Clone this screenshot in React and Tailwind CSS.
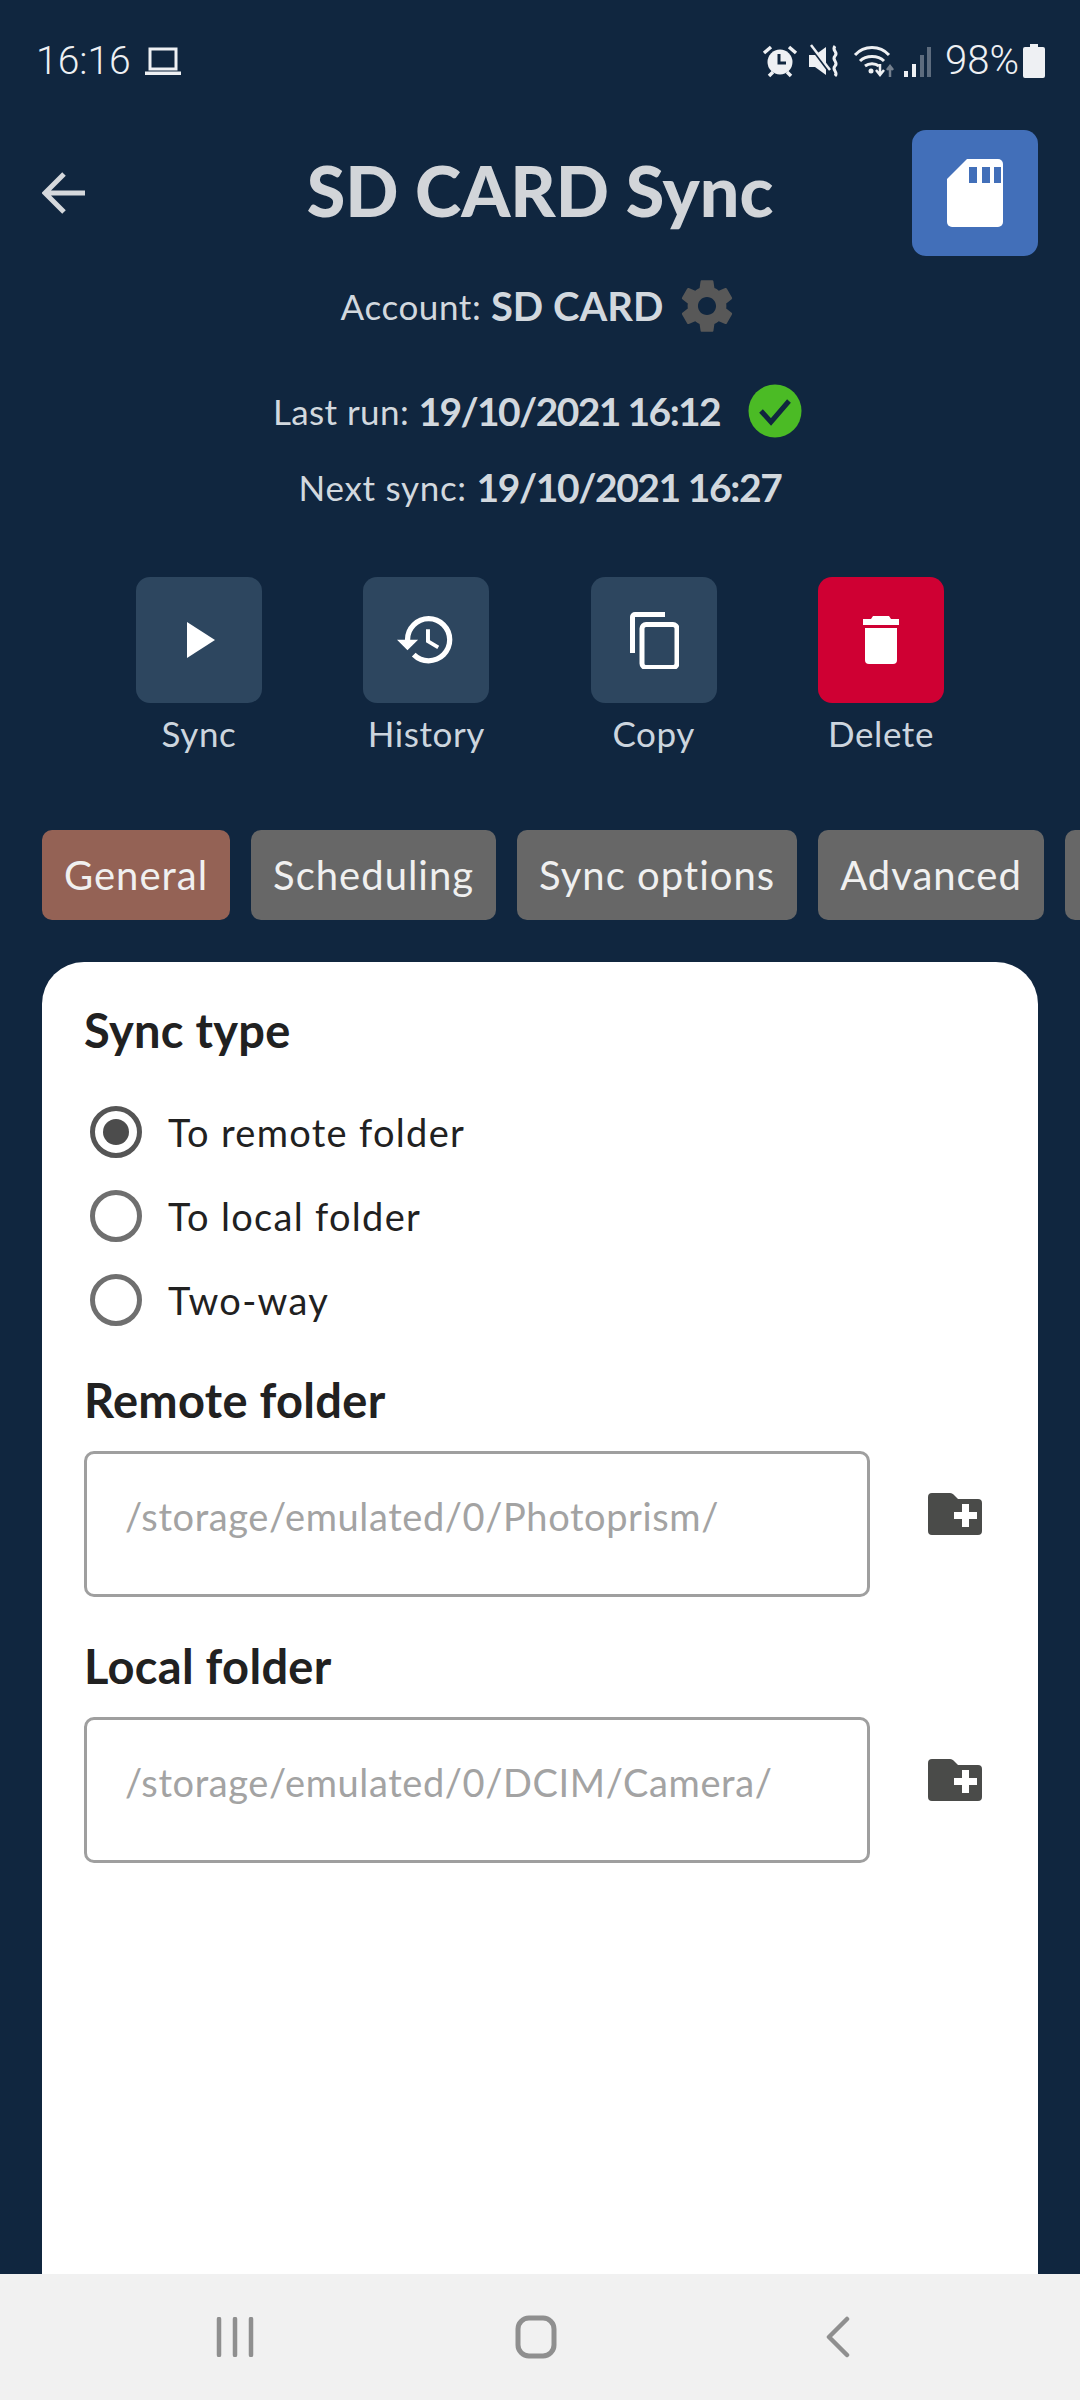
import React from "react";

const textFont = "font-['Lato','Liberation_Sans',sans-serif]";

function StatusBar() {
  return (
    <div className="flex h-[84px] shrink-0 items-end justify-between pr-[35px] pl-[36px] text-[#eef0f3]">
      <div className="flex items-center gap-[14px]">
        <span className="font-['Roboto',sans-serif] text-[39px] leading-[46px] font-light">16:16</span>
        <svg width="36" height="30" viewBox="0 0 36 30">
          <path d="M5 3h26v20H5z" fill="none" stroke="#eef0f3" strokeWidth="3" />
          <path d="M0 25.500h36V29H0z" fill="#eef0f3" />
        </svg>
      </div>
      <div className="flex items-center">
        <svg width="36" height="34" viewBox="0 0 36 34" className="mr-[10px]">
          <circle cx="18" cy="18" r="12.500" fill="#eef0f3" />
          <path d="M17 10v9h7" fill="none" stroke="#10263f" strokeWidth="3" />
          <path d="M2 9l7-6M34 9l-7-6M7 32l4-4M29 32l-4-4" stroke="#eef0f3" strokeWidth="3.500" />
        </svg>
        <svg width="34" height="34" viewBox="0 0 34 34" className="mr-[11px]">
          <path d="M1 11h6l11-8v28L7 23H1z" fill="#eef0f3" />
          <path d="M3 3l18 24" stroke="#10263f" strokeWidth="3" />
          <path d="M3 1l19 25" stroke="#eef0f3" strokeWidth="2.500" />
          <path d="M27 2c-4 5 4 6 0 10s4 6 0 10 4 6 0 10" fill="none" stroke="#eef0f3" strokeWidth="3" />
        </svg>
        <svg width="42" height="34" viewBox="0 0 42 34" className="mr-[8px]">
          <path d="M2 11c9-10 25-10 34 0M7 17c6-6 18-6 24 0M12 22c4-3 10-3 14 0" fill="none" stroke="#eef0f3" strokeWidth="3" />
          <circle cx="18" cy="27" r="2.500" fill="#eef0f3" />
          <path d="M27 20v10M23 26l4 5 4-5" fill="none" stroke="#eef0f3" strokeWidth="2.500" />
          <path d="M37 33v-10M34 26l3-4 3 4" fill="none" stroke="#75808e" strokeWidth="2.500" />
        </svg>
        <svg width="28" height="34" viewBox="0 0 28 34" className="mr-[14px]">
          <path d="M1 27h4v6H1z" fill="#eef0f3" />
          <path d="M9 20h4v13H9z" fill="#eef0f3" />
          <path d="M17 11h4v22h-4z" fill="#5d6c7e" />
          <path d="M24 3h4v30h-4z" fill="#5d6c7e" />
        </svg>
        <span className="font-['Roboto',sans-serif] text-[40px] leading-[46px] font-light">98%</span>
        <svg width="22" height="34" viewBox="0 0 22 34" className="ml-[4px]">
          <path d="M7 0h8v3h5a2 2 0 0 1 2 2v27a2 2 0 0 1-2 2H2a2 2 0 0 1-2-2V5a2 2 0 0 1 2-2h5z" fill="#eef0f3" />
        </svg>
      </div>
    </div>
  );
}

function ActionButton({ label, color, children }) {
  return (
    <div className="flex w-[126px] flex-col items-center">
      <div className={`flex h-[126px] w-[126px] items-center justify-center rounded-[14px] ${color}`}>
        {children}
      </div>
      <span className="mt-[10px] text-[35px] leading-[40px] tracking-[0.6px] whitespace-nowrap text-[#ccd5de]">
        {label}
      </span>
    </div>
  );
}

function Tab({ label, active }) {
  return (
    <div
      className={`flex h-[90px] min-w-[60px] shrink-0 items-center rounded-[10px] px-[22px] text-[40px] tracking-[1px] whitespace-nowrap text-[#f0f0f0] ${
        active ? "bg-[#946255]" : "bg-[#676767]"
      }`}
    >
      {label}
    </div>
  );
}

function Radio({ label, checked }) {
  return (
    <div className="flex h-[84px] items-center">
      <div
        className={`ml-[6px] flex h-[52px] w-[52px] items-center justify-center rounded-full border-[5px] ${
          checked ? "border-[#555555]" : "border-[#6f6f6f]"
        }`}
      >
        {checked && <div className="h-[26px] w-[26px] rounded-full bg-[#4c4c4c]" />}
      </div>
      <span className="ml-[26px] text-[38px] tracking-[1.3px] text-[#212121]">{label}</span>
    </div>
  );
}

function FolderField({ title, value }) {
  return (
    <div>
      <h3 className="text-[47px] leading-[48px] font-bold tracking-[0.3px] text-[#212121]">{title}</h3>
      <div className="mt-[27px] flex items-start">
        <div className="h-[146px] w-[786px] shrink-0 rounded-[10px] border-[3px] border-[#9f9f9f] pt-[38px] pl-[38px] text-[38px] leading-[48px] tracking-[0.6px] whitespace-nowrap text-[#a3a3a3]">
          {value}
        </div>
        <svg width="54" height="44" viewBox="0 0 54 44" className="mt-[41px] ml-[58px]">
          <path
            d="M4 1h18c2 0 3 1 4 2l4 4h20a4 4 0 0 1 4 4v28a4 4 0 0 1-4 4H4a4 4 0 0 1-4-4V5a4 4 0 0 1 4-4z"
            fill="#4a4b49"
          />
          <path d="M34 14h7v8h8v7h-8v8h-7v-8h-8v-7h8z" fill="#ffffff" transform="translate(0 -2)" />
        </svg>
      </div>
    </div>
  );
}

export default function App() {
  return (
    <div className={`flex h-[2400px] w-[1080px] flex-col overflow-hidden bg-[#10263f] ${textFont}`}>
      <StatusBar />

      <div className="mt-[46px] flex items-center justify-between pr-[42px] pl-[42px]">
        <div className="w-[126px]">
          <svg width="44" height="44" viewBox="0 0 44 44">
            <path d="M43 22H4M22 3L3 22l19 19" fill="none" stroke="#d5d8dc" strokeWidth="5" />
          </svg>
        </div>
        <h1 className="pb-[6px] text-[70px] font-black text-[#d2d5d9]">SD CARD Sync</h1>
        <div className="flex h-[126px] w-[126px] items-center justify-center rounded-[14px] bg-[#426fb9]">
          <svg width="56" height="68" viewBox="0 0 56 68">
            <path
              d="M20 0h31a5 5 0 0 1 5 5v58a5 5 0 0 1-5 5H5a5 5 0 0 1-5-5V20z"
              fill="#ffffff"
            />
            <path d="M22 8h8v16h-8zM35 8h8v16h-8zM47 8h7v16h-7z" fill="#426fb9" />
          </svg>
        </div>
      </div>

      <div className="mt-[23px] flex items-center justify-center pr-[1px] text-[#d2d8de]">
        <span className="text-[35px] leading-[54px] tracking-[0.6px]">Account:&nbsp;</span>
        <span className="text-[40px] leading-[54px] font-bold">SD CARD</span>
        <svg width="62" height="62" viewBox="0 0 24 24" className="my-[-4px] ml-[13px]">
          <path
            fill="#585858"
            d="M19.430 12.980c.04-.32.07-.64.07-.98s-.03-.66-.07-.98l2.110-1.650c.19-.15.240-.42.120-.64l-2-3.460c-.12-.22-.39-.3-.61-.22l-2.490 1c-.52-.4-1.080-.73-1.690-.98l-.38-2.650A.488.488 0 0 0 14 2h-4c-.25 0-.46.18-.49.42l-.38 2.650c-.61.25-1.170.59-1.690.98l-2.490-1c-.23-.09-.49 0-.61.22l-2 3.460c-.13.22-.07.49.12.64l2.110 1.650c-.04.32-.07.65-.07.98s.03.66.07.98l-2.110 1.650c-.19.15-.24.42-.12.64l2 3.460c.12.22.39.3.61.22l2.490-1c.52.4 1.080.73 1.690.98l.38 2.650c.03.24.24.42.49.42h4c.25 0 .46-.18.49-.42l.38-2.650c.61-.25 1.170-.59 1.690-.98l2.490 1c.23.09.49 0 .61-.22l2-3.460c.12-.22.07-.49-.12-.64l-2.110-1.650zM12 15.500c-1.930 0-3.500-1.570-3.500-3.500s1.570-3.500 3.500-3.500 3.500 1.570 3.500 3.500-1.570 3.500-3.500 3.500z"
          />
        </svg>
      </div>

      <div className="mt-[51px] flex items-center justify-center pr-[5px] text-[#d2d8de]">
        <span className="text-[35px] leading-[54px] tracking-[0.4px]">Last run:&nbsp;</span>
        <span className="text-[39px] leading-[54px] font-bold tracking-[-1.6px]">19/10/2021 16:12</span>
        <svg width="54" height="54" viewBox="0 0 54 54" className="ml-[28px]">
          <circle cx="27" cy="27" r="26.500" fill="#4bbb25" />
          <path d="M13 27l10 11 18-21" fill="none" stroke="#10263f" strokeWidth="5" />
        </svg>
      </div>

      <div className="mt-[22px] flex items-center justify-center text-[#d2d8de]">
        <span className="text-[35px] leading-[54px] tracking-[0.7px]">Next sync:&nbsp;</span>
        <span className="text-[39px] leading-[54px] font-bold tracking-[-1.4px]">19/10/2021 16:27</span>
      </div>

      <div className="mt-[63px] flex justify-between pr-[136px] pl-[136px]">
        <ActionButton label="Sync" color="bg-[#2d465f]">
          <svg width="30" height="36" viewBox="0 0 30 36" className="ml-[3px]">
            <path d="M1 0l28 18L1 36z" fill="#ffffff" />
          </svg>
        </ActionButton>
        <ActionButton label="History" color="bg-[#2d465f]">
          <svg width="58" height="58" viewBox="1 1.500 22 22" className="mt-[2px]">
            <path
              fill="#ffffff"
              d="M13 3a9 9 0 0 0-9 9H1l3.890 3.890.07.14L9 12H6c0-3.870 3.130-7 7-7s7 3.130 7 7-3.130 7-7 7c-1.930 0-3.680-.79-4.940-2.060l-1.420 1.420A8.954 8.954 0 0 0 13 21a9 9 0 0 0 0-18zm-1 5v5l4.280 2.540.72-1.210-3.500-2.080V8H12z"
            />
          </svg>
        </ActionButton>
        <ActionButton label="Copy" color="bg-[#2d465f]">
          <svg width="50" height="58" viewBox="0 0 50 58">
            <path d="M36 1H6a5 5 0 0 0-5 5v36h5V6h30z" fill="#ffffff" />
            <rect x="13" y="13.500" width="35" height="43" rx="4" fill="none" stroke="#ffffff" strokeWidth="5" />
          </svg>
        </ActionButton>
        <ActionButton label="Delete" color="bg-[#cf0033]">
          <svg width="36" height="48" viewBox="0 0 36 48">
            <path d="M10 0h16l2 3h8v6H0V3h8z" fill="#ffffff" />
            <path d="M2 12h32v32a4 4 0 0 1-4 4H6a4 4 0 0 1-4-4z" fill="#ffffff" />
          </svg>
        </ActionButton>
      </div>

      <div className="mt-[77px] flex gap-[21px] overflow-hidden pl-[42px]">
        <Tab label="General" active />
        <Tab label="Scheduling" />
        <Tab label="Sync options" />
        <Tab label="Advanced" />
        <Tab />
      </div>

      <div className="mx-[42px] mt-[42px] flex-1 rounded-t-[42px] bg-white pt-[41px] pr-[42px] pl-[42px]">
        <h3 className="text-[47px] leading-[54px] font-bold tracking-[0.3px] text-[#212121]">Sync type</h3>
        <div className="mt-[33px]">
          <Radio label="To remote folder" checked />
          <Radio label="To local folder" />
          <Radio label="Two-way" />
        </div>
        <div className="mt-[34px]">
          <FolderField title="Remote folder" value="/storage/emulated/0/Photoprism/" />
        </div>
        <div className="mt-[45px]">
          <FolderField title="Local folder" value="/storage/emulated/0/DCIM/Camera/" />
        </div>
      </div>

      <div className="flex h-[126px] shrink-0 items-center justify-between bg-[#f1f1f1] pr-[229px] pl-[216px]">
        <svg width="38" height="40" viewBox="0 0 38 40">
          <path d="M3 2v36M19 2v36M35 2v36" stroke="#8f8f8f" strokeWidth="4.500" strokeLinecap="round" />
        </svg>
        <svg width="42" height="44" viewBox="0 0 42 44" className="mr-[8px]">
          <rect x="3" y="3" width="36" height="38" rx="11" fill="none" stroke="#8f8f8f" strokeWidth="5" />
        </svg>
        <svg width="26" height="42" viewBox="0 0 26 42">
          <path d="M22 3L4 21l18 18" fill="none" stroke="#8f8f8f" strokeWidth="4.500" strokeLinecap="round" strokeLinejoin="round" />
        </svg>
      </div>
    </div>
  );
}
